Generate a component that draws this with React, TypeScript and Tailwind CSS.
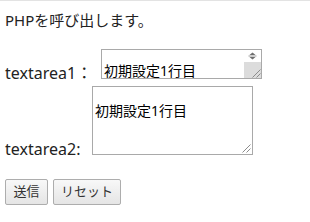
import React from "react";

function Grip({ className }: { className?: string }) {
  return (
    <svg width="10" height="10" viewBox="0 0 10 10" className={className}>
      <line x1="1.5" y1="9.5" x2="9.5" y2="1.5" stroke="#8c8c8c" strokeWidth="1" />
      <line x1="5.5" y1="9.5" x2="9.5" y2="5.5" stroke="#8c8c8c" strokeWidth="1" />
    </svg>
  );
}

export default function App() {
  return (
    <div className="w-[310px] h-[222px] bg-white border-t border-[#e3e3e3] pl-[5px] text-[#222] font-['Noto_Sans','Noto_Sans_CJK_JP',sans-serif] overflow-hidden">
      <div className="mt-[9px] h-[20px] leading-[20px] text-[15px]">PHPを呼び出します。</div>

      <div className="mt-[19px] flex items-end">
        <div className="w-[96px] text-[16px] leading-[16px] mb-[-2px] whitespace-nowrap">textarea1：</div>
        <div className="w-[161px] h-[30px] border border-[#a9a9a9] flex bg-white">
          <div className="flex-1 flex flex-col justify-end pl-[2px]">
            <div className="text-[14px] leading-[15px] text-black whitespace-nowrap">初期設定1行目</div>
          </div>
          <div className="w-[17px] flex flex-col">
            <div className="h-[12px] flex items-center justify-center bg-white">
              <svg width="9" height="8" viewBox="0 0 9 8">
                <polygon points="4.5,0.5 1.5,3 7.5,3" fill="#6e6e6e" />
                <line x1="0.5" y1="4" x2="8.5" y2="4" stroke="#9a9a9a" strokeWidth="1" />
                <polygon points="1.5,5 7.5,5 4.5,7.5" fill="#6e6e6e" />
              </svg>
            </div>
            <div className="flex-1 bg-[#dcdcdc] flex items-end justify-end">
              <Grip />
            </div>
          </div>
        </div>
      </div>

      <div className="mt-[7px] flex items-end">
        <div className="w-[87px] text-[16px] leading-[16px] mb-[-2px] whitespace-nowrap">textarea2:</div>
        <div className="relative w-[161px] h-[69px] border border-[#a9a9a9] bg-white pt-[1px] pl-[2px]">
          <div className="text-[14px] leading-[15px] text-black">&nbsp;</div>
          <div className="text-[14px] leading-[15px] text-black whitespace-nowrap">初期設定1行目</div>
          <Grip className="absolute right-[1px] bottom-[1px]" />
        </div>
      </div>

      <div className="mt-[24px] flex gap-[5px]">
        <button className="w-[43px] h-[26px] border border-[#adadad] rounded-[2px] bg-linear-to-b from-[#f8f8f8] to-[#e5e5e5] text-[13px] text-[#333] flex items-center justify-center">
          送信
        </button>
        <button className="w-[68px] h-[26px] border border-[#adadad] rounded-[2px] bg-linear-to-b from-[#f8f8f8] to-[#e5e5e5] text-[13px] text-[#333] flex items-center justify-center">
          リセット
        </button>
      </div>
    </div>
  );
}
